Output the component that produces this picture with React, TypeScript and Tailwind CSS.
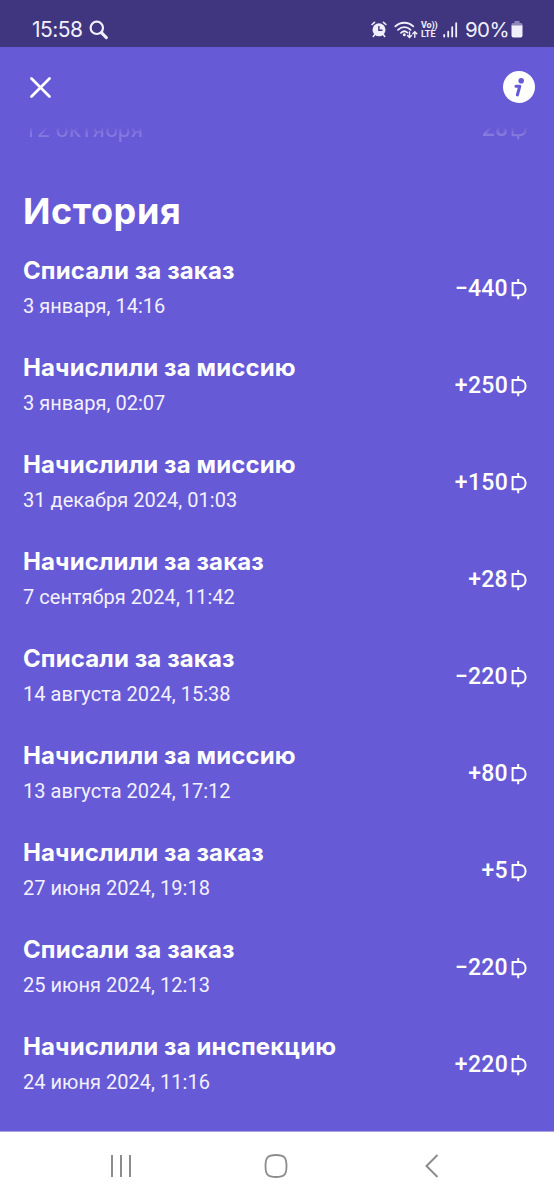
interface HistoryItem {
  title: string;
  date: string;
  amount: string;
}

const history: HistoryItem[] = [
  { title: 'Списали за заказ', date: '3 января, 14:16', amount: '−440' },
  { title: 'Начислили за миссию', date: '3 января, 02:07', amount: '+250' },
  { title: 'Начислили за миссию', date: '31 декабря 2024, 01:03', amount: '+150' },
  { title: 'Начислили за заказ', date: '7 сентября 2024, 11:42', amount: '+28' },
  { title: 'Списали за заказ', date: '14 августа 2024, 15:38', amount: '−220' },
  { title: 'Начислили за миссию', date: '13 августа 2024, 17:12', amount: '+80' },
  { title: 'Начислили за заказ', date: '27 июня 2024, 19:18', amount: '+5' },
  { title: 'Списали за заказ', date: '25 июня 2024, 12:13', amount: '−220' },
  { title: 'Начислили за инспекцию', date: '24 июня 2024, 11:16', amount: '+220' }
];

function CoinIcon() {
  return (
    <svg width="16" height="22" viewBox="0 0 16 22" fill="none" stroke="currentColor" strokeWidth="2">
      <path d="M1.6 4.9H8.6C12.2 4.9 14.6 7.6 14.6 11.1S12.2 17.3 8.6 17.3H1.6Z" />
      <path d="M7.2 1V4.9M7.2 17.3V21.2" />
    </svg>
  );
}

function StatusBar() {
  return (
    <div className="flex h-[47px] items-center bg-[#3f367f] pt-3 pr-[31px] pl-8 text-[#f1effc]">
      <span className="w-[50px] font-['Inter',sans-serif] text-[21px] leading-6 tracking-[-0.5px]">15:58</span>
      <svg className="ml-[7px]" width="20" height="20" viewBox="0 0 20 20" fill="none" stroke="currentColor" strokeLinecap="round">
        <circle cx="7.8" cy="7.8" r="6.2" strokeWidth="2.2" />
        <path d="M12.4 12.6L17.4 17.6" strokeWidth="3" />
      </svg>

      <div className="ml-auto flex items-center">
        {/* Alarm */}
        <svg width="16" height="17" viewBox="0 0 16 17" fill="none" stroke="currentColor" strokeLinecap="round">
          <circle cx="8" cy="8.8" r="6.5" fill="currentColor" stroke="none" />
          <path d="M1.1 3.5L3.5 1.4M14.9 3.5L12.5 1.4M3.8 13.6L2.3 15.4M12.2 13.6L13.7 15.4" strokeWidth="1.6" />
          <path d="M7.9 5.4V9.2H11" stroke="#3f367f" strokeWidth="1.4" />
        </svg>
        {/* Wi-Fi */}
        <svg className="ml-[7px]" width="24" height="20" viewBox="0 0 24 20" fill="none" stroke="currentColor" strokeLinecap="round">
          <path d="M1.3 6.4C6.4 1.5 14.2 1.5 19.3 6.4M4 9.8C7.8 6.2 12.9 6.2 16.6 9.8M7 12.8C9 11 11.6 11 13.4 12.6" strokeWidth="1.8" />
          <circle cx="10.3" cy="14.8" r="1.5" fill="currentColor" stroke="none" />
          <path d="M15.5 12V17.3M13.5 15.5L15.5 17.5L17.5 15.5M20.8 17.3V12M18.8 13.8L20.8 11.8L22.8 13.8" strokeWidth="1.4" />
        </svg>
        {/* VoLTE */}
        <div className="ml-[3px] w-[17px] font-['Roboto',sans-serif] text-[9px] leading-[9px] font-bold">
          <div className="tracking-[-0.1px]">Vo))</div>
          <div>LTE</div>
        </div>
        {/* Signal */}
        <svg className="ml-[5px]" width="15" height="16" viewBox="0 0 15 16" fill="none" stroke="currentColor" strokeWidth="1.8" strokeLinecap="round">
          <path d="M1.2 13V14.5M5.2 9.6V14.5" />
          <path d="M9.2 5.2V14.5M13.2 1.2V14.5" />
        </svg>
        <span className="ml-[7px] w-[45px] font-['Inter',sans-serif] text-[20.5px] leading-6 tracking-[-0.6px] whitespace-nowrap">90%</span>
        {/* Battery */}
        <svg className="ml-px" width="12" height="17" viewBox="0 0 12 17">
          <path d="M3.5 0H8.5V2H10Q11.5 2 11.5 3.5V5H.5V3.5Q.5 2 2 2H3.5Z" fill="#8d87b8" />
          <path d="M.5 4.5H11.5V14.5Q11.5 16.5 9.5 16.5H2.5Q.5 16.5 .5 14.5Z" fill="currentColor" />
        </svg>
      </div>
    </div>
  );
}

function Header() {
  return (
    <header className="flex h-20 items-center justify-between pr-[19px] pl-[30px]">
      <button aria-label="Закрыть">
        <svg width="21" height="21" viewBox="0 0 21 21" fill="none" stroke="currentColor" strokeWidth="2.7" strokeLinecap="round">
          <path d="M1.5 1.5L19.5 19.5M19.5 1.5L1.5 19.5" />
        </svg>
      </button>
      <button aria-label="Информация">
        <svg width="32" height="32" viewBox="0 0 32 32">
          <circle cx="16" cy="16" r="16" fill="#fff" />
          <circle cx="18.2" cy="9.7" r="2.8" fill="#675ad6" />
          <path d="M13 15.2H16.8L14.4 23.8" fill="none" stroke="#675ad6" strokeWidth="3.1" strokeLinecap="round" strokeLinejoin="round" />
        </svg>
      </button>
    </header>
  );
}

function HistoryRow({ title, date, amount }: HistoryItem) {
  return (
    <li className="flex h-[97px] items-center justify-between">
      <div>
        <p className="font-['Inter',sans-serif] text-[24px] leading-9 font-bold tracking-[0.12px]">{title}</p>
        <p className="text-[20px] leading-[34px] tracking-[0.03px] text-[#f3f1fd]">{date}</p>
      </div>
      <div className="flex items-center gap-[3px] pt-[3px]">
        <span className="text-[23px] leading-7 font-medium tracking-[0.3px]">{amount}</span>
        <CoinIcon />
      </div>
    </li>
  );
}

function NavigationBar() {
  return (
    <nav className="flex h-[69px] items-center border-t border-[#aaa2df] bg-white pl-[110px] text-[#8c8c8c]">
      <svg width="22" height="24" viewBox="0 0 22 24" stroke="currentColor" strokeWidth="2">
        <path d="M2 1V23M11 1V23M20 1V23" />
      </svg>
      <svg className="ml-[132px]" width="24" height="24" viewBox="0 0 24 24" fill="none" stroke="currentColor" strokeWidth="1.8">
        <path d="M12 1C20.5 1 22.5 3.5 22.5 12S20.5 23 12 23S1.5 20.5 1.5 12S3.5 1 12 1Z" />
      </svg>
      <svg className="ml-[137px]" width="14" height="24" viewBox="0 0 14 24" fill="none" stroke="currentColor" strokeWidth="2">
        <path d="M12.5 1L1.5 12L12.5 23" />
      </svg>
    </nav>
  );
}

export default function App() {
  return (
    <div className="flex h-[1200px] w-[554px] flex-col overflow-hidden bg-[#675ad6] font-['Roboto',sans-serif] text-white">
      <StatusBar />
      <Header />

      <main className="flex-1">
        {/* Row fading out under the header */}
        <div className="-mt-3 flex h-8 items-center justify-between mask-t-from-40% mask-t-to-63% pr-[27px] pb-1 pl-6 opacity-20">
          <span className="text-[22.5px] leading-7 tracking-[0.3px]">12 октября</span>
          <div className="flex items-center gap-[3px]">
            <span className="text-[23px] leading-7 font-medium">28</span>
            <CoinIcon />
          </div>
        </div>

        <h1 className="mt-10 pl-[23px] font-['Inter',sans-serif] text-[36px] leading-[48px] font-bold tracking-[0.6px]">История</h1>
        <ul className="mt-1 pr-[27px] pl-[23px]">
          {history.map((item) => (
            <HistoryRow key={item.date} {...item} />
          ))}
        </ul>
      </main>

      <NavigationBar />
    </div>
  );
}
